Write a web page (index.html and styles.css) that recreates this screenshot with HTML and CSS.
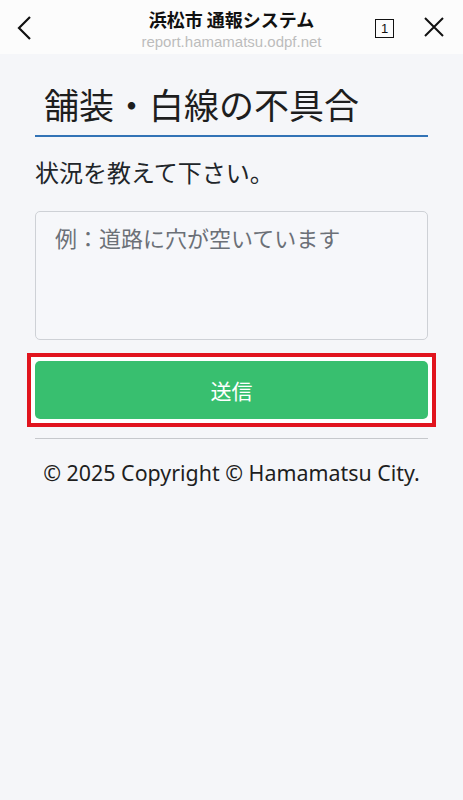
FILE: index.html
```html
<!DOCTYPE html>
<html lang="ja">
<head>
    <meta charset="UTF-8">
    <meta name="viewport" content="width=device-width, initial-scale=1.0">
    <title>浜松市 通報システム</title>
    <link rel="stylesheet" href="styles.css">
</head>
<body>

<!-- ブラウザのヘッダー -->
<header class="topbar">
    <button class="icon-btn back" aria-label="戻る">
        <svg width="22" height="26" viewBox="0 0 22 26"><path d="M16 2 L5 13 L16 24" fill="none" stroke="#111" stroke-width="2.2"/></svg>
    </button>
    <div class="topbar-title">
        <div class="site-name">浜松市 通報システム</div>
        <div class="site-url">report.hamamatsu.odpf.net</div>
    </div>
    <div class="topbar-right">
        <span class="tab-count">1</span>
        <button class="icon-btn close" aria-label="閉じる">
            <svg width="20" height="20" viewBox="0 0 20 20"><path d="M1 1 L19 19 M19 1 L1 19" fill="none" stroke="#111" stroke-width="2"/></svg>
        </button>
    </div>
</header>

<main class="content">
    <h1 class="page-title">舗装・白線の不具合</h1>

    <form class="report-form">
        <label class="form-label" for="detail">状況を教えて下さい。</label>
        <textarea id="detail" class="form-textarea" placeholder="例：道路に穴が空いています"></textarea>

        <!-- 送信ボタン (赤枠で強調) -->
        <div class="highlight">
            <button type="button" class="submit-btn">送信</button>
        </div>
    </form>

    <hr class="divider">

    <footer class="copyright">© 2025 Copyright © Hamamatsu City.</footer>
</main>

</body>
</html>
```

FILE: styles.css
```css
/* 全体 */
body {
    margin: 0;
    padding: 0;
    font-family: "Noto Sans CJK JP", "Noto Sans", sans-serif;
    background-color: #f5f6f9;
    color: #212529;
}

/* ヘッダー */
.topbar {
    height: 54px;
    background-color: #fcfcfc;
    display: flex;
    align-items: center;
    justify-content: space-between;
    padding: 0 19px 0 14px;
    box-sizing: border-box;
    position: relative;
}

.icon-btn {
    background: none;
    border: none;
    padding: 0;
    display: flex;
    align-items: center;
}

.back {
    margin-top: 1px;
}

.topbar-title {
    position: absolute;
    left: 0;
    right: 0;
    top: 7px;
    text-align: center;
    pointer-events: none;
}

.site-name {
    font-size: 18px;
    font-weight: bold;
    line-height: 24px;
    color: #111;
}

.site-url {
    font-family: "Liberation Sans", Arial, sans-serif;
    font-size: 15px;
    line-height: 18px;
    color: #bcbcbc;
    margin-top: 2px;
}

.topbar-right {
    display: flex;
    align-items: center;
    gap: 30px;
}

.tab-count {
    width: 17px;
    height: 17px;
    border: 1.7px solid #111;
    font-family: "Liberation Sans", Arial, sans-serif;
    font-size: 13px;
    line-height: 17px;
    text-align: center;
    color: #111;
    margin-top: 2px;
}

/* コンテンツ */
.content {
    padding: 0 35px;
}

.page-title {
    margin: 25px 0 0;
    padding: 0 0 6px 9px;
    font-size: 35px;
    font-weight: normal;
    line-height: 50px;
    color: #1e1e1e;
    border-bottom: 2px solid #3273b6;
}

.report-form {
    display: flex;
    flex-direction: column;
}

.form-label {
    margin-top: 18px;
    font-size: 24px;
    line-height: 34px;
}

.form-textarea {
    margin-top: 22px;
    height: 129px;
    box-sizing: border-box;
    border: 1px solid #ced1d6;
    border-radius: 5px;
    background-color: #f6f7fa;
    padding: 9px 19px;
    font-family: "Noto Sans CJK JP", sans-serif;
    font-size: 22px;
    line-height: 32px;
    resize: none;
}

.form-textarea::placeholder {
    color: #6b7077;
}

/* 赤枠 */
.highlight {
    margin: 13px -8px 0;
    border: 4px solid #e1141e;
    padding: 4px;
    background-color: #ffffff;
}

.submit-btn {
    width: 100%;
    height: 58px;
    border: none;
    border-radius: 5px;
    background-color: #38bf6f;
    color: #ffffff;
    font-family: "Noto Sans CJK JP", sans-serif;
    font-size: 21px;
}

.divider {
    margin: 11px 0 0;
    border: none;
    border-top: 1px solid #c6c8cc;
}

.copyright {
    margin-top: 19px;
    text-align: center;
    font-family: "Noto Sans", sans-serif;
    font-size: 21.4px;
    line-height: 30px;
    color: #1e1e1e;
}
```
